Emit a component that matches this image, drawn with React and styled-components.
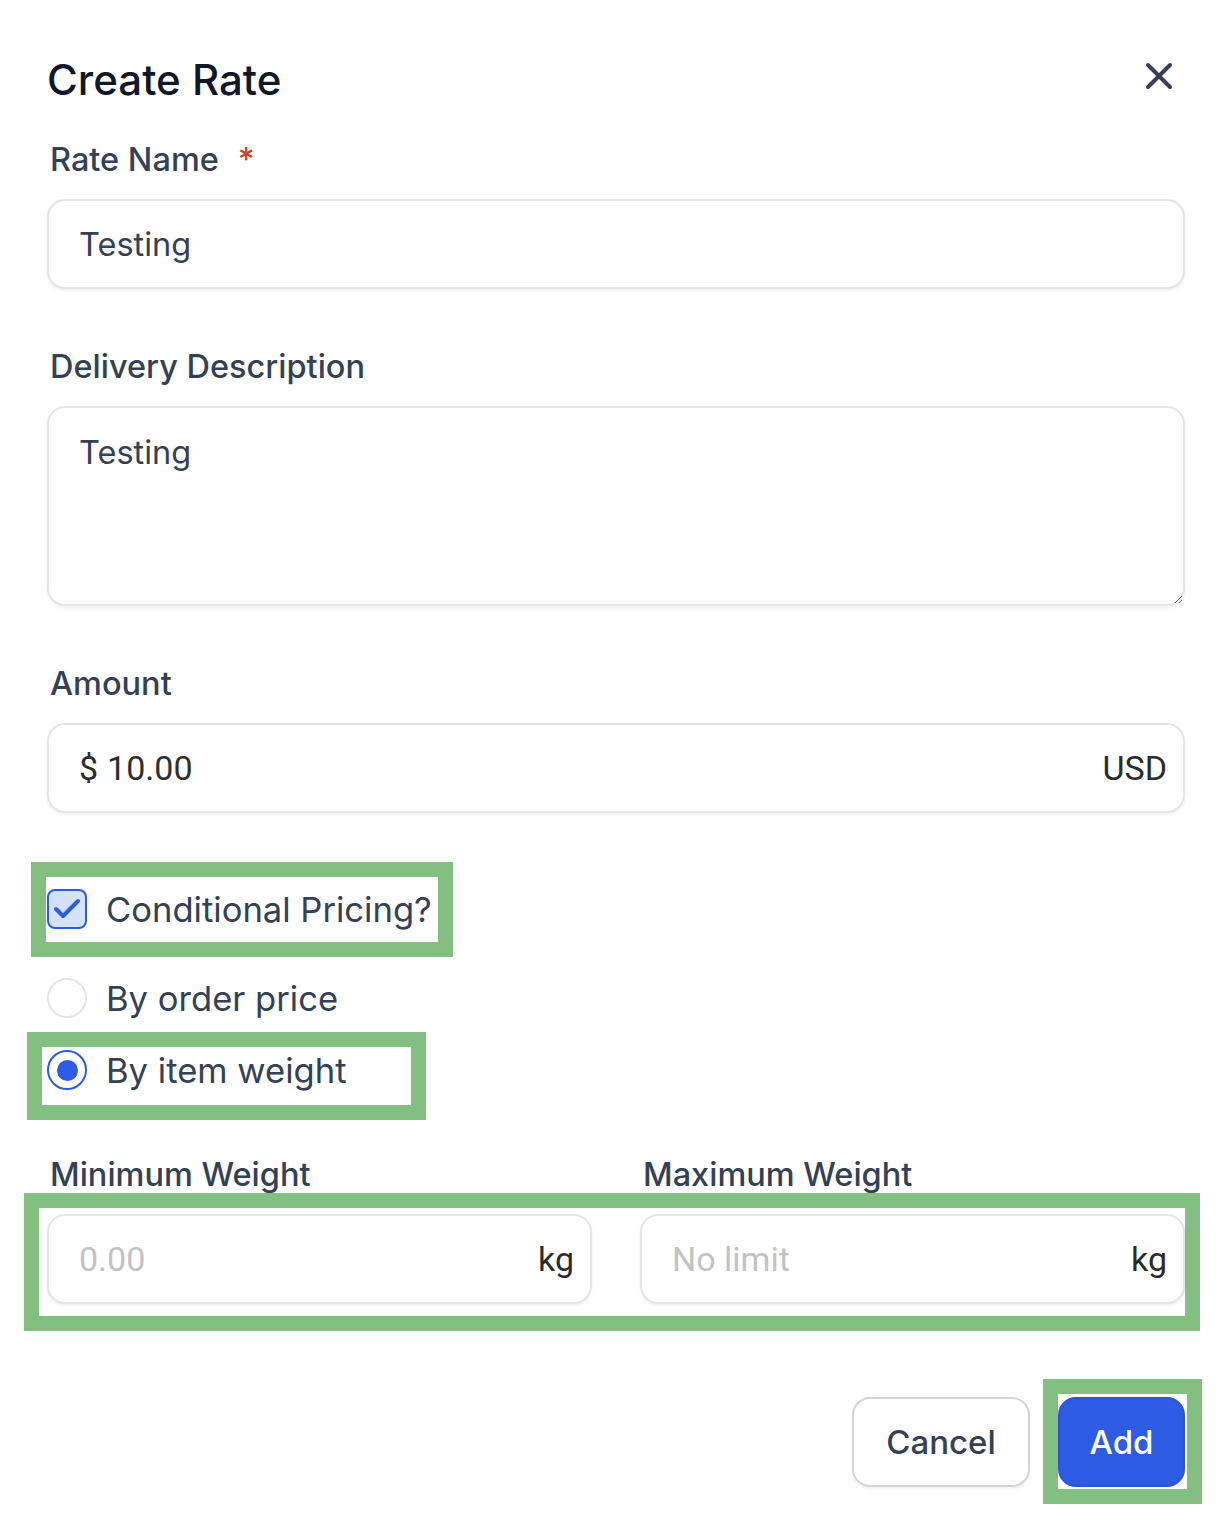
import styled, { createGlobalStyle } from "styled-components";

const GlobalStyle = createGlobalStyle`
  html, body {
    margin: 0;
    padding: 0;
    background: #ffffff;
  }
  body {
    font-family: "Inter", "Liberation Sans", sans-serif;
    -webkit-font-smoothing: antialiased;
  }
  *, *::before, *::after {
    box-sizing: border-box;
  }
`;

const Page = styled.div`
  width: 1226px;
  min-height: 1534px;
  padding: 55px 41px 0 47px;
  background: #ffffff;
`;

const Header = styled.div`
  display: flex;
  justify-content: space-between;
  align-items: flex-start;
`;

const Title = styled.h1`
  margin: 0;
  font-size: 42px;
  line-height: 50px;
  font-weight: 500;
  color: #101828;
`;

const CloseButton = styled.button`
  border: none;
  background: none;
  padding: 0;
  margin: 7px 12px 0 0;
  width: 28px;
  height: 28px;
  cursor: pointer;
  display: flex;
`;

const Field = styled.div`
  margin-top: ${(p) => p.$top || 56}px;
  display: flex;
  flex-direction: column;
`;

const Label = styled.label`
  padding: 2px 0 0 3px;
  margin-bottom: 19px;
  font-size: 32.5px;
  line-height: 40px;
  font-weight: 500;
  color: #344054;
`;

const Required = styled.span`
  margin-left: 19px;
  color: #d23f2e;
`;

const InputShell = styled.div`
  height: 90px;
  display: flex;
  align-items: center;
  padding: 0 16px 0 30px;
  border: 2px solid #e4e4e9;
  border-radius: 18px;
  background: #ffffff;
  box-shadow: 0 2px 3px rgba(16, 24, 40, 0.06);
`;

const TextInput = styled.input`
  flex: 1;
  min-width: 0;
  border: none;
  outline: none;
  padding: 0;
  background: transparent;
  font-family: ${(p) =>
    p.$roboto ? `"Roboto", "Liberation Sans", sans-serif` : `"Inter", "Liberation Sans", sans-serif`};
  font-size: ${(p) => (p.$roboto ? 34 : 32.5)}px;
  color: ${(p) => (p.$roboto ? "#2e2e2e" : "#344054")};

  &::placeholder {
    color: #c2c2c2;
  }
`;

const Affix = styled.span`
  font-family: "Roboto", "Liberation Sans", sans-serif;
  font-size: 34px;
  color: #2b2b2b;
  margin-right: ${(p) => p.$gap || 0}px;
`;

const TextArea = styled.textarea`
  height: 200px;
  padding: 25px 30px;
  border: 2px solid #e4e4e9;
  border-radius: 18px;
  box-shadow: 0 2px 3px rgba(16, 24, 40, 0.06);
  outline: none;
  font-family: "Inter", "Liberation Sans", sans-serif;
  font-size: 32.5px;
  line-height: 40px;
  color: #344054;
`;

const Highlight = styled.div`
  position: relative;
  display: ${(p) => (p.$block ? "block" : "inline-flex")};

  &::after {
    content: "";
    position: absolute;
    left: ${(p) => p.$left}px;
    top: ${(p) => p.$top}px;
    width: ${(p) => p.$w}px;
    height: ${(p) => p.$h}px;
    border: 15px solid #82bf81;
    pointer-events: none;
  }
`;

const OptionRow = styled.label`
  display: inline-flex;
  align-items: center;
  gap: 19px;
  height: 48px;
  font-size: 34.6px;
  color: #344054;
  cursor: pointer;
`;

const CheckBox = styled.span`
  width: 40px;
  height: 40px;
  flex-shrink: 0;
  border: 2px solid #2d5be3;
  border-radius: 8px;
  background: #d5e0fb;
  display: flex;
  align-items: center;
  justify-content: center;
`;

const Radio = styled.span`
  width: 40px;
  height: 40px;
  flex-shrink: 0;
  border-radius: 50%;
  border: 2px solid ${(p) => (p.$checked ? "#2d5be3" : "#e3e3e8")};
  background: #ffffff;
  display: flex;
  align-items: center;
  justify-content: center;

  &::after {
    content: "";
    width: 21px;
    height: 21px;
    border-radius: 50%;
    background: ${(p) => (p.$checked ? "#2d5be3" : "transparent")};
  }
`;

const CheckWrap = styled.div`
  margin-top: 72px;
`;

const RadioGroup = styled.div`
  margin-top: 41px;
  display: flex;
  flex-direction: column;
  align-items: flex-start;
  gap: 24px;
`;

const TwoColumns = styled.div`
  display: grid;
  grid-template-columns: 1fr 1fr;
  column-gap: 48px;
`;

const Actions = styled.div`
  margin-top: 93px;
  display: flex;
  justify-content: flex-end;
  gap: 28px;
`;

const Button = styled.button`
  height: 90px;
  width: ${(p) => p.$w}px;
  border-radius: 18px;
  font-family: "Inter", "Liberation Sans", sans-serif;
  font-size: 33px;
  font-weight: 500;
  cursor: pointer;
  border: 2px solid ${(p) => (p.$primary ? "#2a55e0" : "#d0d5dd")};
  background: ${(p) => (p.$primary ? "#2d5be3" : "#ffffff")};
  color: ${(p) => (p.$primary ? "#ffffff" : "#344054")};
  box-shadow: ${(p) => (p.$primary ? "none" : "0 2px 3px rgba(16, 24, 40, 0.06)")};
`;

const App = () => {
  return (
    <Page>
      <GlobalStyle />
      <Header>
        <Title>Create Rate</Title>
        <CloseButton aria-label="Close">
          <svg width="28" height="28" viewBox="0 0 28 28">
            <path
              d="M3 3 L25 25 M25 3 L3 25"
              stroke="#363f55"
              strokeWidth="4"
              strokeLinecap="round"
              fill="none"
            />
          </svg>
        </CloseButton>
      </Header>

      <Field $top={33}>
        <Label>
          Rate Name<Required>*</Required>
        </Label>
        <InputShell>
          <TextInput defaultValue="Testing" />
        </InputShell>
      </Field>

      <Field>
        <Label>Delivery Description</Label>
        <TextArea defaultValue="Testing" />
      </Field>

      <Field>
        <Label>Amount</Label>
        <InputShell>
          <Affix $gap={9}>$</Affix>
          <TextInput $roboto defaultValue="10.00" />
          <Affix>USD</Affix>
        </InputShell>
      </Field>

      <CheckWrap>
        <Highlight $left={-16} $top={-23} $w={422} $h={95}>
          <OptionRow>
            <CheckBox>
              <svg width="28" height="22" viewBox="0 0 28 22">
                <path
                  d="M3 11 L10 18 L25 3"
                  stroke="#2d5be3"
                  strokeWidth="4"
                  strokeLinecap="round"
                  strokeLinejoin="round"
                  fill="none"
                />
              </svg>
            </CheckBox>
            Conditional Pricing?
          </OptionRow>
        </Highlight>
      </CheckWrap>

      <RadioGroup>
        <OptionRow>
          <Radio />
          By order price
        </OptionRow>
        <Highlight $left={-20} $top={-14} $w={399} $h={88}>
          <OptionRow>
            <Radio $checked />
            By item weight
          </OptionRow>
        </Highlight>
      </RadioGroup>

      <Field $top={59}>
        <TwoColumns>
          <Label>Minimum Weight</Label>
          <Label>Maximum Weight</Label>
        </TwoColumns>
        <Highlight $block $left={-23} $top={-21} $w={1176} $h={138}>
          <TwoColumns>
            <InputShell>
              <TextInput $roboto placeholder="0.00" />
              <Affix>kg</Affix>
            </InputShell>
            <InputShell>
              <TextInput $roboto placeholder="No limit" />
              <Affix>kg</Affix>
            </InputShell>
          </TwoColumns>
        </Highlight>
      </Field>

      <Actions>
        <Button $w={178}>Cancel</Button>
        <Highlight $left={-15} $top={-18} $w={159} $h={125}>
          <Button $primary $w={127}>
            Add
          </Button>
        </Highlight>
      </Actions>
    </Page>
  );
};

export default App;
